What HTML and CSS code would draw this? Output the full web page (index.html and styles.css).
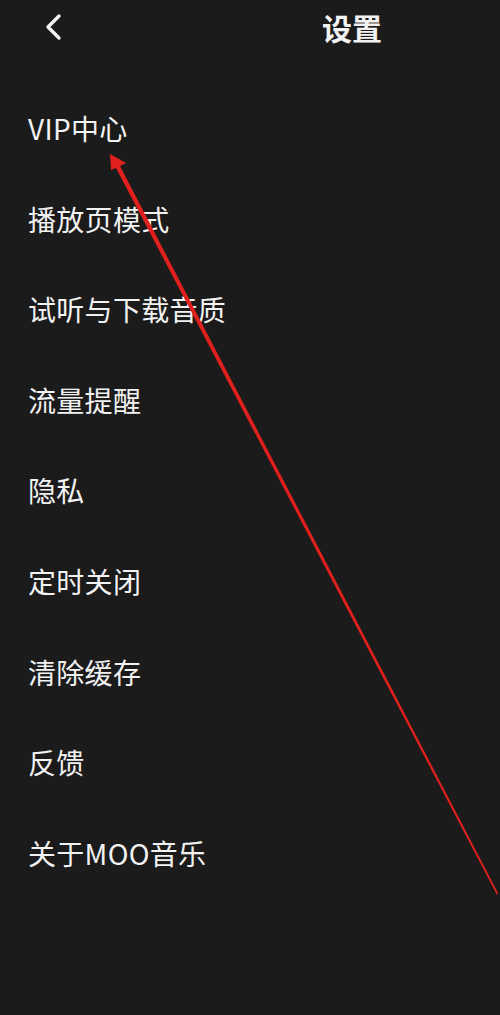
FILE: index.html
```html
<!DOCTYPE html>
<html lang="zh">
<head>
<meta charset="utf-8">
<title>设置</title>
<link rel="stylesheet" href="styles.css">
</head>
<body>
<div class="page">
  <header class="topbar">
    <div class="back">
      <svg width="20" height="30" viewBox="0 0 20 30"><polyline points="14,3 3,14 14,25" fill="none" stroke="#f2f2f2" stroke-width="3.4" stroke-linecap="round" stroke-linejoin="round"/></svg>
    </div>
    <h1 class="title">设置</h1>
  </header>
  <ul class="menu">
    <li class="item">VIP中心</li>
    <li class="item">播放页模式</li>
    <li class="item">试听与下载音质</li>
    <li class="item">流量提醒</li>
    <li class="item">隐私</li>
    <li class="item">定时关闭</li>
    <li class="item">清除缓存</li>
    <li class="item">反馈</li>
    <li class="item">关于MOO音乐</li>
  </ul>
  <svg class="annot" width="500" height="1015" viewBox="0 0 500 1015">
    <polygon points="110,154 126,163 120,166 498,893 497,895 116,168 111,170" fill="#e0201c"/>
  </svg>
</div>
</body>
</html>
```
FILE: styles.css
```css
html, body {
  margin: 0;
  padding: 0;
  background: #1b1b1b;
}
.page {
  position: relative;
  width: 500px;
  height: 1015px;
  overflow: hidden;
  background: #1b1b1b;
  font-family: "Noto Sans CJK SC", "Noto Sans", sans-serif;
  color: #f2f2f2;
}
.topbar {
  height: 55px;
  display: flex;
  align-items: center;
  position: relative;
}
.back {
  margin-left: 45px;
  display: flex;
}
.title {
  margin: 0 0 0 257px;
  font-size: 30px;
  font-weight: 700;
  line-height: 55px;
}
.menu {
  list-style: none;
  margin: 0;
  padding: 28px 0 0 28px;
}
.item {
  height: 90.6px;
  line-height: 90.6px;
  font-size: 28px;
  font-weight: 400;
  letter-spacing: 0.3px;
}
.annot {
  position: absolute;
  left: 0;
  top: 0;
  pointer-events: none;
}
```
